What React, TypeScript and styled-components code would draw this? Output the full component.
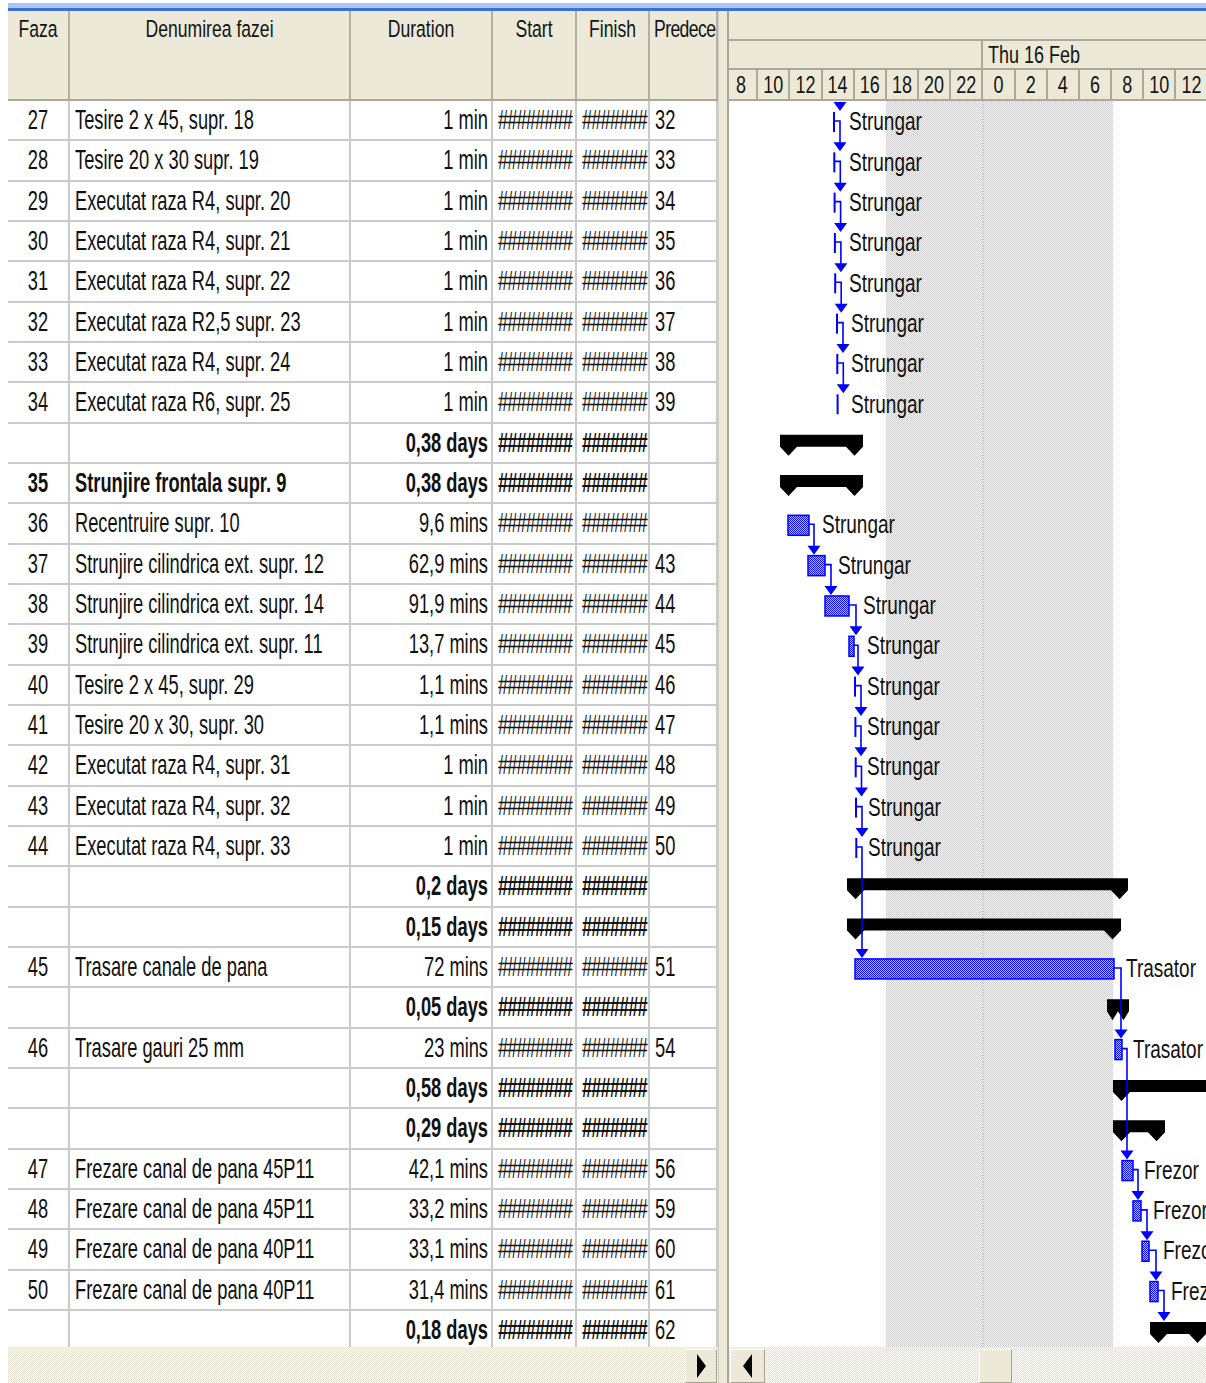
import React, { FC } from 'react';
import styled, { createGlobalStyle } from 'styled-components';

const GlobalStyle = createGlobalStyle`
  html, body {
    margin: 0;
    padding: 0;
    background: #fff;
  }
  body {
    font-family: 'Liberation Sans', Arial, sans-serif;
    color: #111;
  }
`;

const COLS = [62, 281, 142, 84, 73, 68];
const GRID = COLS.map(c => `${c}px`).join(' ');
const ROW_H = 40.33;
const BODY_H = 1246;
const GANTT_LEFT = 729;
const GANTT_W = 477;
// dates too long for the column come out as a run of hashes
const START_HASH = '########';
const FINISH_HASH = '#######';

type Phase = {
  faza?: string;
  name?: string;
  duration: string;
  pred?: string;
  summary?: boolean;
  strong?: boolean;
};

const phases: Phase[] = [
  { faza: '27', name: 'Tesire 2 x 45, supr. 18', duration: '1 min', pred: '32' },
  { faza: '28', name: 'Tesire 20 x 30 supr. 19', duration: '1 min', pred: '33' },
  { faza: '29', name: 'Executat raza R4, supr. 20', duration: '1 min', pred: '34' },
  { faza: '30', name: 'Executat raza R4, supr. 21', duration: '1 min', pred: '35' },
  { faza: '31', name: 'Executat raza R4, supr. 22', duration: '1 min', pred: '36' },
  { faza: '32', name: 'Executat raza R2,5 supr. 23', duration: '1 min', pred: '37' },
  { faza: '33', name: 'Executat raza R4, supr. 24', duration: '1 min', pred: '38' },
  { faza: '34', name: 'Executat raza R6, supr. 25', duration: '1 min', pred: '39' },
  { duration: '0,38 days', summary: true },
  { faza: '35', name: 'Strunjire frontala supr. 9', duration: '0,38 days', summary: true, strong: true },
  { faza: '36', name: 'Recentruire supr. 10', duration: '9,6 mins' },
  { faza: '37', name: 'Strunjire cilindrica ext. supr. 12', duration: '62,9 mins', pred: '43' },
  { faza: '38', name: 'Strunjire cilindrica ext. supr. 14', duration: '91,9 mins', pred: '44' },
  { faza: '39', name: 'Strunjire cilindrica ext. supr. 11', duration: '13,7 mins', pred: '45' },
  { faza: '40', name: 'Tesire 2 x 45, supr. 29', duration: '1,1 mins', pred: '46' },
  { faza: '41', name: 'Tesire 20 x 30, supr. 30', duration: '1,1 mins', pred: '47' },
  { faza: '42', name: 'Executat raza R4, supr. 31', duration: '1 min', pred: '48' },
  { faza: '43', name: 'Executat raza R4, supr. 32', duration: '1 min', pred: '49' },
  { faza: '44', name: 'Executat raza R4, supr. 33', duration: '1 min', pred: '50' },
  { duration: '0,2 days', summary: true },
  { duration: '0,15 days', summary: true },
  { faza: '45', name: 'Trasare canale de pana', duration: '72 mins', pred: '51' },
  { duration: '0,05 days', summary: true },
  { faza: '46', name: 'Trasare gauri 25 mm', duration: '23 mins', pred: '54' },
  { duration: '0,58 days', summary: true },
  { duration: '0,29 days', summary: true },
  { faza: '47', name: 'Frezare canal de pana 45P11', duration: '42,1 mins', pred: '56' },
  { faza: '48', name: 'Frezare canal de pana 45P11', duration: '33,2 mins', pred: '59' },
  { faza: '49', name: 'Frezare canal de pana 40P11', duration: '33,1 mins', pred: '60' },
  { faza: '50', name: 'Frezare canal de pana 40P11', duration: '31,4 mins', pred: '61' },
  { duration: '0,18 days', summary: true, pred: '62' },
];

// gantt geometry, x in screen pixels of the chart
type Bar = { row: number; x1: number; x2: number; label: string; lx: number; via?: number; to?: number };
type SummaryBar = { row: number; x1: number; x2: number };

const bars: Bar[] = [
  ...[0, 1, 2, 3, 4, 5, 6, 7].map(k => {
    const x = 834 + k * 0.3 + (k >= 5 ? 1.5 : 0);
    return { row: k, x1: x, x2: x, label: 'Strungar', lx: k >= 5 ? 851 : 849, via: k < 7 ? x + 6 : undefined, to: k + 1 };
  }),
  { row: 10, x1: 788, x2: 809, label: 'Strungar', lx: 822, via: 814, to: 11 },
  { row: 11, x1: 808, x2: 825, label: 'Strungar', lx: 838, via: 831, to: 12 },
  { row: 12, x1: 825, x2: 849, label: 'Strungar', lx: 863, via: 856, to: 13 },
  { row: 13, x1: 849, x2: 854, label: 'Strungar', lx: 867, via: 858, to: 14 },
  { row: 14, x1: 855, x2: 855, label: 'Strungar', lx: 867, via: 861, to: 15 },
  { row: 15, x1: 855.4, x2: 855.4, label: 'Strungar', lx: 867, via: 861, to: 16 },
  { row: 16, x1: 855.7, x2: 855.7, label: 'Strungar', lx: 867, via: 861.5, to: 17 },
  { row: 17, x1: 856, x2: 856, label: 'Strungar', lx: 868, via: 862, to: 18 },
  { row: 18, x1: 856.3, x2: 856.3, label: 'Strungar', lx: 868, via: 862, to: 21 },
  { row: 21, x1: 855, x2: 1114, label: 'Trasator', lx: 1126, via: 1121, to: 23 },
  { row: 23, x1: 1115, x2: 1122, label: 'Trasator', lx: 1133, via: 1127, to: 26 },
  { row: 26, x1: 1122, x2: 1133, label: 'Frezor', lx: 1144, via: 1138, to: 27 },
  { row: 27, x1: 1133, x2: 1141, label: 'Frezor', lx: 1153, via: 1147, to: 28 },
  { row: 28, x1: 1142, x2: 1149, label: 'Frezor', lx: 1163, via: 1156, to: 29 },
  { row: 29, x1: 1150, x2: 1158, label: 'Frezor', lx: 1171, via: 1164, to: 30 },
];

const summaries: SummaryBar[] = [
  { row: 8, x1: 780, x2: 863 },
  { row: 9, x1: 780, x2: 863 },
  { row: 19, x1: 847, x2: 1128 },
  { row: 20, x1: 847, x2: 1121 },
  { row: 22, x1: 1107, x2: 1129 },
  { row: 24, x1: 1113, x2: 1260 },
  { row: 25, x1: 1113, x2: 1165 },
  { row: 30, x1: 1150, x2: 1206 },
];

const hours = ['8', '10', '12', '14', '16', '18', '20', '22', '0', '2', '4', '6', '8', '10', '12'];

const X = (px: number) => px - GANTT_LEFT;
const rowTop = (row: number) => row * ROW_H;

const summaryPath = ({ row, x1, x2 }: SummaryBar) => {
  const t = rowTop(row);
  const a = X(x1);
  const b = X(x2);
  const cap = Math.min(17, (b - a) / 2);
  return `M ${a} ${t + 11} H ${b} V ${t + 23} L ${b - cap / 2} ${t + 32} L ${b - cap} ${t + 23} H ${a + cap} L ${a + cap / 2} ${t + 32} L ${a} ${t + 23} Z`;
};

const arrowHead = (x: number, row: number) => {
  const t = rowTop(row);
  const v = X(x);
  return `${v - 6.5},${t + 1} ${v + 6.5},${t + 1} ${v},${t + 10}`;
};

const Screen = styled.div`
  width: 1206px;
  height: 1383px;
  overflow: hidden;
  padding-left: 8px;
  box-sizing: border-box;
  display: flex;
  flex-direction: column;
`;

const TitleBand = styled.div`
  height: 11px;
  flex: none;
  background: linear-gradient(#fff 0 3px, #adc5f1 3px 8px, #3e6fd9 8px 11px);
`;

const Panes = styled.div`
  display: flex;
  flex: none;
  height: 1336px;
`;

const TablePane = styled.div`
  width: 710px;
  flex: none;
  display: flex;
  flex-direction: column;
`;

const Splitter = styled.div`
  width: 11px;
  flex: none;
  box-sizing: border-box;
  background: #ece9d8;
  border-left: 1px solid #d2cfc2;
  border-right: 2px solid #a9a699;
`;

const GanttPane = styled.div`
  flex: 1;
  min-width: 0;
  display: flex;
  flex-direction: column;
  overflow: hidden;
`;

const HeadRow = styled.div`
  display: grid;
  grid-template-columns: ${GRID};
  height: 90px;
  flex: none;
  box-sizing: border-box;
  background: #ece9d8;
  border-bottom: 2px solid #aca899;
`;

const HeadCell = styled.div<{ $left?: boolean }>`
  box-sizing: border-box;
  border-right: 2px solid #b3b0a3;
  padding-top: 8px;
  padding-left: ${p => (p.$left ? '4px' : '0')};
  text-align: ${p => (p.$left ? 'left' : 'center')};
  overflow: hidden;
  white-space: nowrap;
`;

const HeadText = styled.span<{ $tight?: boolean }>`
  display: inline-block;
  font-size: 17.6px;
  line-height: 20px;
  letter-spacing: ${p => (p.$tight ? '-0.6px' : 'normal')};
  transform: scaleY(1.4);
  color: #141414;
`;

const Body = styled.div`
  height: ${BODY_H}px;
  flex: none;
  overflow: hidden;
`;

const Row = styled.div`
  display: grid;
  grid-template-columns: ${GRID};
  height: ${ROW_H}px;
  box-sizing: border-box;
  border-bottom: 2px solid #cacaca;
`;

const Cell = styled.div<{ $align?: 'left' | 'center' | 'right' }>`
  box-sizing: border-box;
  border-right: 2px solid #cacaca;
  display: flex;
  align-items: center;
  justify-content: ${p => (p.$align === 'center' ? 'center' : p.$align === 'right' ? 'flex-end' : 'flex-start')};
  padding: ${p => (p.$align === 'right' ? '0 3px 0 0' : p.$align === 'center' ? '0' : '0 0 0 5px')};
  overflow: hidden;
  white-space: nowrap;
`;

const CellText = styled.span<{ $bold?: boolean; $hash?: boolean }>`
  display: inline-block;
  font-size: 18.3px;
  line-height: 20px;
  font-weight: ${p => (p.$bold ? 700 : 400)};
  letter-spacing: ${p => (p.$hash ? '-0.9px' : 'normal')};
  transform: scaleY(1.55);
  color: #111;
`;

const GanttHead = styled.div`
  height: 90px;
  flex: none;
  box-sizing: border-box;
  background: #ece9d8;
  border-bottom: 2px solid #aca899;
  display: flex;
  flex-direction: column;
`;

const Tier = styled.div<{ $h: number; $line?: boolean }>`
  height: ${p => p.$h}px;
  flex: none;
  display: flex;
  box-sizing: border-box;
  border-bottom: ${p => (p.$line ? '2px solid #aca899' : 'none')};
`;

const TierCell = styled.div<{ $w?: number }>`
  ${p => (p.$w ? `width: ${p.$w}px; flex: none;` : 'flex: 1;')}
  box-sizing: border-box;
  border-right: ${p => (p.$w ? '2px solid #aca899' : 'none')};
  display: flex;
  align-items: center;
  padding-left: 5px;
  white-space: nowrap;
`;

const HourStrip = styled.div`
  display: flex;
  margin-left: -3px;
`;

const HourCell = styled.div`
  width: 32.18px;
  flex: none;
  box-sizing: border-box;
  border-right: 2px solid #aca899;
  display: flex;
  align-items: center;
  justify-content: center;
`;

const ScaleText = styled.span`
  display: inline-block;
  font-size: 18px;
  line-height: 20px;
  transform: scaleY(1.38);
  color: #141414;
`;

const ChartBody = styled.div`
  height: ${BODY_H}px;
  flex: none;
  overflow: hidden;
  svg {
    display: block;
  }
`;

const BarLabel = styled.text`
  font-family: 'Liberation Sans', Arial, sans-serif;
  font-size: 19px;
  fill: #111;
`;

const ScrollRow = styled.div`
  display: flex;
  height: 36px;
  flex: none;
`;

const Track = styled.div`
  display: flex;
  align-items: flex-end;
  box-sizing: border-box;
  background: repeating-conic-gradient(#e6e3d3 0 25%, #fbfaf5 0 50%) 0 0 / 2px 2px;
`;

const TableTrack = styled(Track)`
  width: 710px;
  flex: none;
  justify-content: flex-end;
  padding-right: 1px;
`;

const ChartTrack = styled(Track)`
  flex: 1;
  padding-left: 1px;
`;

const ScrollButton = styled.div<{ $w: number }>`
  width: ${p => p.$w}px;
  height: 34px;
  flex: none;
  box-sizing: border-box;
  background: #ece9d8;
  border: 1px solid;
  border-color: #fff #a5a293 #a5a293 #fff;
  display: flex;
  align-items: center;
  justify-content: center;
`;

const Thumb = styled(ScrollButton)`
  margin-left: 214px;
`;

const Arrow = styled.div<{ $dir: 'left' | 'right' }>`
  width: 0;
  height: 0;
  border-top: 12px solid transparent;
  border-bottom: 12px solid transparent;
  ${p => (p.$dir === 'right' ? 'border-left: 9px solid #000;' : 'border-right: 9px solid #000;')}
`;

const PhaseTable: FC = () => (
  <TablePane>
    <HeadRow>
      <HeadCell><HeadText>Faza</HeadText></HeadCell>
      <HeadCell><HeadText>Denumirea fazei</HeadText></HeadCell>
      <HeadCell><HeadText>Duration</HeadText></HeadCell>
      <HeadCell><HeadText>Start</HeadText></HeadCell>
      <HeadCell><HeadText>Finish</HeadText></HeadCell>
      <HeadCell $left><HeadText $tight>Predece</HeadText></HeadCell>
    </HeadRow>
    <Body>
      {phases.map((p, i) => (
        <Row key={i}>
          <Cell $align="center">{p.faza && <CellText $bold={p.strong}>{p.faza}</CellText>}</Cell>
          <Cell>{p.name && <CellText $bold={p.strong}>{p.name}</CellText>}</Cell>
          <Cell $align="right"><CellText $bold={p.summary}>{p.duration}</CellText></Cell>
          <Cell><CellText $hash $bold={p.summary}>{START_HASH}</CellText></Cell>
          <Cell><CellText $hash $bold={p.summary}>{FINISH_HASH}</CellText></Cell>
          <Cell>{p.pred && <CellText>{p.pred}</CellText>}</Cell>
        </Row>
      ))}
    </Body>
  </TablePane>
);

const GanttChart: FC = () => (
  <GanttPane>
    <GanttHead>
      <Tier $h={30} $line />
      <Tier $h={29} $line>
        <TierCell $w={254} />
        <TierCell><ScaleText>Thu 16 Feb</ScaleText></TierCell>
      </Tier>
      <Tier $h={29}>
        <HourStrip>
          {hours.map((h, i) => (
            <HourCell key={i}><ScaleText>{h}</ScaleText></HourCell>
          ))}
        </HourStrip>
      </Tier>
    </GanttHead>
    <ChartBody>
      <svg width={GANTT_W} height={BODY_H}>
        <defs>
          <pattern id="offHours" width="2" height="2" patternUnits="userSpaceOnUse">
            <rect width="2" height="2" fill="#f6f6f6" />
            <rect width="1" height="1" fill="#cdcdcd" />
            <rect x="1" y="1" width="1" height="1" fill="#cdcdcd" />
          </pattern>
          <pattern id="taskFill" width="2" height="2" patternUnits="userSpaceOnUse">
            <rect width="2" height="2" fill="#b8b8ff" />
            <rect width="1" height="1" fill="#1010ff" />
            <rect x="1" y="1" width="1" height="1" fill="#1010ff" />
          </pattern>
        </defs>

        <rect x={X(886)} y={0} width={1113 - 886} height={BODY_H} fill="url(#offHours)" />
        <line x1={X(983)} x2={X(983)} y1={0} y2={BODY_H} stroke="#a9a9a9" strokeDasharray="1 2" />

        {summaries.map(s => (
          <path key={`s${s.row}`} d={summaryPath(s)} fill="#000" />
        ))}

        {bars.map(b => {
          const t = rowTop(b.row);
          return b.x2 - b.x1 < 3 ? (
            <rect key={`b${b.row}`} x={X(b.x1) - 1} y={t + 11} width={2} height={20} fill="#0000ff" />
          ) : (
            <rect
              key={`b${b.row}`}
              x={X(b.x1)}
              y={t + 11}
              width={b.x2 - b.x1}
              height={20}
              fill="url(#taskFill)"
              stroke="#0000ff"
              strokeWidth={1.5}
            />
          );
        })}

        {bars.map(b =>
          b.via !== undefined && b.to !== undefined ? (
            <g key={`l${b.row}`}>
              <path
                d={`M ${X(b.x2)} ${rowTop(b.row) + 20} H ${X(b.via)} V ${rowTop(b.to) + 3}`}
                fill="none"
                stroke="#0000ff"
                strokeWidth={1.6}
              />
              <polygon points={arrowHead(b.via, b.to)} fill="#0000ff" />
            </g>
          ) : null,
        )}
        <polygon points={arrowHead(840, 0)} fill="#0000ff" />

        {bars.map(b => (
          <g key={`t${b.row}`} transform={`translate(${X(b.lx)} ${rowTop(b.row) + 20}) scale(1 1.35)`}>
            <BarLabel x={0} y={6.8}>{b.label}</BarLabel>
          </g>
        ))}
      </svg>
    </ChartBody>
  </GanttPane>
);

const App: FC = () => (
  <>
    <GlobalStyle />
    <Screen>
      <TitleBand />
      <Panes>
        <PhaseTable />
        <Splitter />
        <GanttChart />
      </Panes>
      <ScrollRow>
        <TableTrack>
          <ScrollButton $w={32}><Arrow $dir="right" /></ScrollButton>
        </TableTrack>
        <Splitter />
        <ChartTrack>
          <ScrollButton $w={35}><Arrow $dir="left" /></ScrollButton>
          <Thumb $w={33} />
        </ChartTrack>
      </ScrollRow>
    </Screen>
  </>
);

export default App;
